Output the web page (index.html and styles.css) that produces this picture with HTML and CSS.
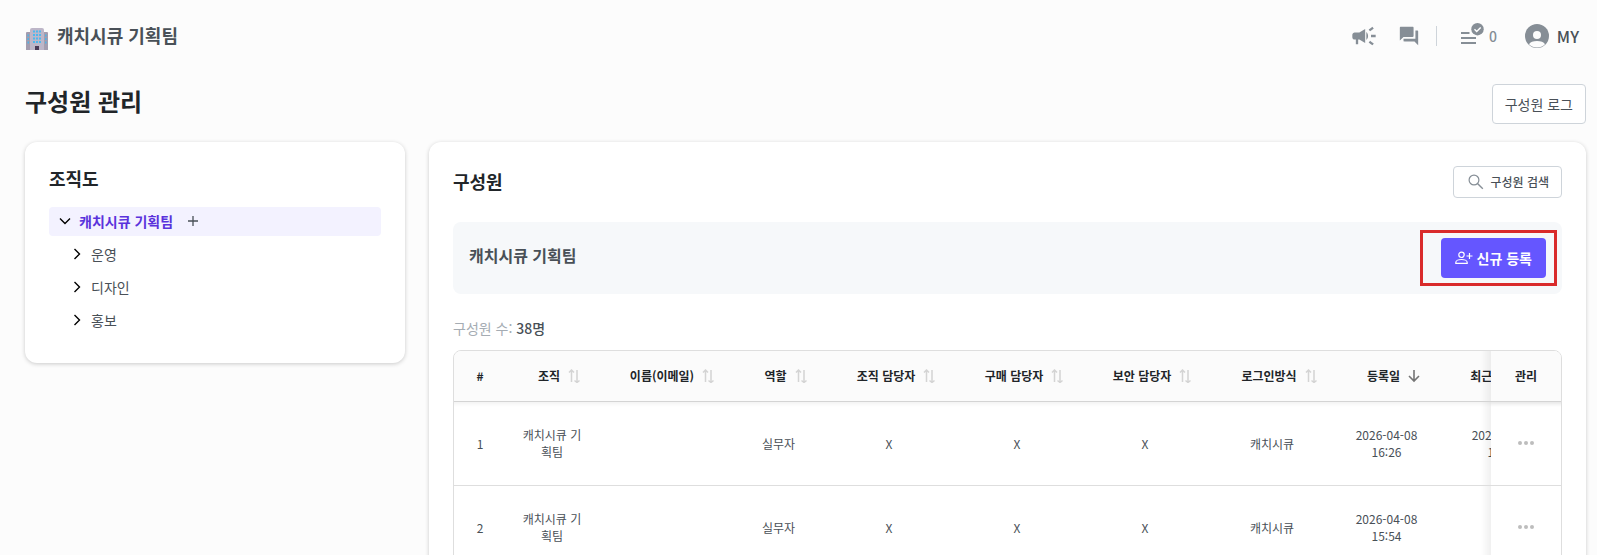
FILE: index.html
```html
<!DOCTYPE html>
<html lang="ko">
  <head>
    <meta charset="UTF-8" />
    <meta name="viewport" content="width=device-width, initial-scale=1.0" />
    <title>구성원 관리</title>
    <link rel="stylesheet" href="styles.css">
  </head>
  <body>
    <!-- shared icons -->
    <svg class="sprite" aria-hidden="true">
      <symbol id="sort" viewBox="0 0 12 14">
        <path d="M3.5 13V1.5M1 3.5L3.5 1L6 3.5M9 1v11.5M6.5 11.5L9 13.5L11.5 11.5" fill="none" stroke="currentColor" stroke-width="1.5" />
      </symbol>
      <symbol id="chevron" viewBox="0 0 12 12">
        <path d="M3.5 1l5 5-5 5" fill="none" stroke="currentColor" stroke-width="1.4" />
      </symbol>
      <symbol id="dots" viewBox="0 0 16 4">
        <circle cx="2" cy="2" r="2" />
        <circle cx="8" cy="2" r="2" />
        <circle cx="14" cy="2" r="2" />
      </symbol>
    </svg>

    <div class="app">
      <header class="topbar">
        <a class="team" href="#">
          <svg width="22" height="22" viewBox="0 0 22 22">
            <path d="M0 5q0-1 1-1h4v18H0zM17 4h4q1 0 1 1v17h-5z" fill="#a39daf" />
            <path d="M4 2q0-2 2-2h10q2 0 2 2v20H4z" fill="#bdb6c8" />
            <path d="M1.500 6.500h1.500v2H1.500zM1.500 10h1.500v2H1.500zM1.500 13.500h1.500v2H1.500zM19 6.500h1.500v2H19zM19 10h1.500v2H19zM19 13.500h1.500v2H19z" fill="#4fb3e8" />
            <path d="M7 2.500h2v2H7zM10 2.500h2v2h-2zM13 2.500h2v2h-2zM7 6h2v2H7zM10 6h2v2h-2zM13 6h2v2h-2zM7 9.500h2v2H7zM10 9.500h2v2h-2zM13 9.500h2v2h-2zM7 13h2v2H7zM10 13h2v2h-2zM13 13h2v2h-2z" fill="#4db8ee" />
            <path d="M9 18h4v4H9z" fill="#4a3b57" />
          </svg>
          <span>캐치시큐 기획팀</span>
        </a>
        <nav class="tools">
          <button class="tool" aria-label="공지">
            <svg width="28" height="28" viewBox="0 0 24 24" fill="currentColor"><path d="M18 11v2h4v-2h-4zm-2 6.610c.96.71 2.210 1.650 3.200 2.390.4-.53.8-1.070 1.200-1.600-.99-.74-2.240-1.680-3.200-2.400-.4.54-.8 1.080-1.200 1.610zM20.400 5.600c-.4-.53-.8-1.070-1.200-1.600-.99.74-2.240 1.680-3.200 2.400.4.53.8 1.070 1.200 1.600.96-.72 2.210-1.650 3.200-2.400zM4 9c-1.100 0-2 .9-2 2v2c0 1.100.9 2 2 2h1v4h2v-4h1l5 3V6L8 9H4zm11.500 3c0-1.330-.58-2.530-1.500-3.350v6.690c.92-.81 1.500-2.010 1.500-3.340z" /></svg>
          </button>
          <button class="tool" aria-label="문의">
            <svg width="22" height="22" viewBox="0 0 24 24" fill="currentColor"><path d="M21 6h-2v9H6v2c0 .55.45 1 1 1h11l4 4V7c0-.55-.45-1-1-1zm-4 6V3c0-.55-.45-1-1-1H3c-.55 0-1 .45-1 1v14l4-4h10c.55 0 1-.45 1-1z" /></svg>
          </button>
          <span class="divider"></span>
          <button class="tool todo">
            <svg width="24" height="24" viewBox="0 0 24 24" aria-hidden="true">
              <path d="M1 10h8.500M1 15h15M1 20h15" stroke="currentColor" stroke-width="2" />
              <circle cx="17.500" cy="6.200" r="6.200" fill="currentColor" />
              <path d="M14.500 6.200l2.200 2.200 4-4" fill="none" stroke="#fff" stroke-width="1.400" />
            </svg>
            <span>0</span>
          </button>
          <button class="tool my">
            <svg width="24" height="24" viewBox="0 0 24 24" aria-hidden="true">
              <circle cx="12" cy="12" r="12" fill="currentColor" />
              <circle cx="12" cy="11" r="4" fill="#fcfcfc" />
              <path d="M4 20.200a8.500 4.800 0 0 1 16 0a11.500 11.500 0 0 1-16 0z" fill="#fcfcfc" />
            </svg>
            <span>MY</span>
          </button>
        </nav>
      </header>

      <div class="page-head">
        <h1>구성원 관리</h1>
        <button class="btn">구성원 로그</button>
      </div>

      <main class="content">
        <section class="card org">
          <h2>조직도</h2>
          <ul class="tree">
            <li class="node selected">
              <button class="toggle open" aria-label="접기"><svg width="12" height="12"><use href="#chevron" /></svg></button>
              <a href="#">캐치시큐 기획팀</a>
              <button class="add" aria-label="조직 추가">
                <svg width="10" height="10" viewBox="0 0 10 10"><path d="M5 0v10M0 5h10" stroke="currentColor" stroke-width="1.300" /></svg>
              </button>
            </li>
            <li class="node child">
              <button class="toggle" aria-label="펼치기"><svg width="12" height="12"><use href="#chevron" /></svg></button>
              <a href="#">운영</a>
            </li>
            <li class="node child">
              <button class="toggle" aria-label="펼치기"><svg width="12" height="12"><use href="#chevron" /></svg></button>
              <a href="#">디자인</a>
            </li>
            <li class="node child">
              <button class="toggle" aria-label="펼치기"><svg width="12" height="12"><use href="#chevron" /></svg></button>
              <a href="#">홍보</a>
            </li>
          </ul>
        </section>

        <section class="card members">
          <div class="members-head">
            <h2>구성원</h2>
            <button class="btn search">
              <svg width="16" height="16" viewBox="0 0 16 16" aria-hidden="true"><circle cx="6" cy="6" r="4.900" fill="none" stroke="currentColor" stroke-width="1.200" /><path d="M9.500 9.500l5.300 5.300" stroke="currentColor" stroke-width="1.400" /></svg>
              구성원 검색
            </button>
          </div>

          <div class="group">
            <h3>캐치시큐 기획팀</h3>
            <div class="highlight">
              <button class="btn primary">
                <svg width="18" height="14" viewBox="0 0 18 14" aria-hidden="true" fill="none" stroke="currentColor" stroke-width="1.200">
                  <circle cx="6.500" cy="3.800" r="2.700" />
                  <path d="M.8 12.400v-1c0-1.800 3-2.900 5.700-2.900s5.700 1.100 5.700 2.900v1zM14.500 2v6M11.500 5h6" />
                </svg>
                신규 등록
              </button>
            </div>
          </div>

          <p class="count">구성원 수: <strong>38명</strong></p>

          <div class="table-wrap">
            <table>
              <colgroup>
                <col class="c-num"><col class="c-org"><col class="c-name"><col class="c-role">
                <col class="c-mgr"><col class="c-mgr"><col class="c-mgr"><col class="c-login">
                <col class="c-date"><col class="c-last"><col class="c-act">
              </colgroup>
              <thead>
                <tr>
                  <th>#</th>
                  <th><button class="sort">조직<svg width="12" height="14"><use href="#sort" /></svg></button></th>
                  <th><button class="sort">이름(이메일)<svg width="12" height="14"><use href="#sort" /></svg></button></th>
                  <th><button class="sort">역할<svg width="12" height="14"><use href="#sort" /></svg></button></th>
                  <th><button class="sort">조직 담당자<svg width="12" height="14"><use href="#sort" /></svg></button></th>
                  <th><button class="sort">구매 담당자<svg width="12" height="14"><use href="#sort" /></svg></button></th>
                  <th><button class="sort">보안 담당자<svg width="12" height="14"><use href="#sort" /></svg></button></th>
                  <th><button class="sort">로그인방식<svg width="12" height="14"><use href="#sort" /></svg></button></th>
                  <th>
                    <button class="sort active">등록일<svg width="12" height="14" viewBox="0 0 12 14"><path d="M6 1v11M1 7l5 5 5-5" fill="none" stroke="currentColor" stroke-width="1.600" /></svg></button>
                  </th>
                  <th><button class="sort">최근 접속일<svg width="12" height="14"><use href="#sort" /></svg></button></th>
                  <th class="pinned">관리</th>
                </tr>
              </thead>
              <tbody>
                <tr>
                  <td>1</td>
                  <td>캐치시큐 기획팀</td>
                  <td></td>
                  <td>실무자</td>
                  <td>X</td>
                  <td>X</td>
                  <td>X</td>
                  <td>캐치시큐</td>
                  <td>2026-04-08 16:26</td>
                  <td>2026-04-08<br>16:27</td>
                  <td class="pinned"><button class="more" aria-label="관리 메뉴"><svg width="16" height="4"><use href="#dots" /></svg></button></td>
                </tr>
                <tr>
                  <td>2</td>
                  <td>캐치시큐 기획팀</td>
                  <td></td>
                  <td>실무자</td>
                  <td>X</td>
                  <td>X</td>
                  <td>X</td>
                  <td>캐치시큐</td>
                  <td>2026-04-08 15:54</td>
                  <td></td>
                  <td class="pinned"><button class="more" aria-label="관리 메뉴"><svg width="16" height="4"><use href="#dots" /></svg></button></td>
                </tr>
              </tbody>
            </table>
          </div>
        </section>
      </main>
    </div>
  </body>
</html>
```

FILE: styles.css
```css
* {
  margin: 0;
  padding: 0;
  box-sizing: border-box;
}

html {
  background: #fff;
}

body {
  font-family: "Noto Sans CJK KR", "Noto Sans", sans-serif;
  font-size: 14px;
  line-height: 20px;
  color: #495057;
}

/* scrolls on its own, with a thin white edge below */
.app {
  height: calc(100vh - 4px);
  overflow-y: auto;
  scrollbar-width: none;
  background: #fcfcfc;
}

button {
  font: inherit;
  color: inherit;
  border: none;
  background: none;
  cursor: pointer;
}

a {
  color: inherit;
  text-decoration: none;
}

svg {
  display: block;
  flex: none;
}

h1,
h2 {
  color: #212529;
}

.sprite {
  display: none;
}

/* top bar */
.topbar {
  display: flex;
  justify-content: space-between;
  align-items: center;
  height: 72px;
  padding: 0 18px 0 26px;
}

.team {
  display: flex;
  align-items: flex-end;
  gap: 9px;
  font-size: 18px;
  line-height: 26px;
  font-weight: 700;
}

.team span {
  padding-bottom: 2px;
}

.tools {
  display: flex;
  align-items: center;
  color: #868e96;
}

.tool {
  display: flex;
  align-items: center;
}

.tool + .tool {
  margin-left: 20px;
}

.divider {
  width: 1px;
  height: 20px;
  margin: 0 23px 0 16px;
  background: #ced4da;
}

.todo {
  gap: 5px;
  font-weight: 500;
}

.todo svg {
  margin-bottom: 2px;
}

.tools .my {
  margin-left: 28px;
  gap: 8px;
  font-size: 16px;
  font-weight: 500;
}

.my span {
  color: #495057;
}

/* page title */
.page-head {
  display: flex;
  justify-content: space-between;
  align-items: flex-start;
  padding: 12px 11px 18px 25px;
}

h1 {
  font-size: 24px;
  line-height: 34px;
}

.btn {
  display: flex;
  align-items: center;
  justify-content: center;
  height: 40px;
  padding: 0 12px;
  border: 1px solid #ced4da;
  border-radius: 4px;
  background: #fff;
}

/* cards */
.content {
  display: flex;
  align-items: flex-start;
  gap: 24px;
  padding: 0 11px 24px 25px;
}

.card {
  padding: 24px;
  border-radius: 12px;
  background: #fff;
  box-shadow: 0 1px 4px rgba(0, 0, 0, 0.2);
}

h2 {
  font-size: 18px;
  line-height: 24px;
}

.org {
  flex: 0 0 380px;
  padding-bottom: 28px;
}

.tree {
  display: flex;
  flex-direction: column;
  gap: 4px;
  margin-top: 17px;
  list-style: none;
}

.node {
  display: flex;
  align-items: center;
  height: 29px;
  padding: 0 0 2px 10px;
  border-radius: 4px;
}

.node.child {
  padding-left: 22px;
}

.toggle {
  margin-right: 8px;
  color: #000;
}

.toggle.open svg {
  transform: rotate(90deg);
}

.selected {
  background: #f3f2ff;
}

.selected a {
  color: #5a32dc;
  font-weight: 700;
}

.add {
  margin-left: 15px;
}

.members {
  flex: 1;
  min-width: 0;
}

.members-head {
  display: flex;
  justify-content: space-between;
  align-items: center;
}

.members-head h2 {
  padding-bottom: 2px;
}

.search {
  gap: 6px;
  height: 32px;
  padding: 0 12px 0 14px;
  font-size: 12px;
  font-weight: 500;
}

.search svg {
  color: #868e96;
}

.group {
  display: flex;
  justify-content: space-between;
  align-items: center;
  height: 72px;
  margin-top: 24px;
  padding: 0 5px 0 16px;
  border-radius: 8px;
  background: #f6f8fa;
}

h3 {
  padding-bottom: 6px;
  font-size: 16px;
  font-weight: 700;
}

.highlight {
  padding: 5px 8px 5px 18px;
  border: 3px solid #d92b2b;
}

.primary {
  gap: 4px;
  padding: 0 14px;
  border: none;
  color: #fff;
  background: #6556ff;
  font-weight: 700;
}

.count {
  margin: 24px 0 12px;
  color: #a5acb3;
}

.count strong {
  color: #495057;
  font-weight: 500;
}

/* members table */
.table-wrap {
  overflow-x: auto;
  border: 1px solid #dedede;
  border-radius: 8px;
}

table {
  width: 100%;
  min-width: 1183px;
  table-layout: fixed;
  border-collapse: separate;
  border-spacing: 0;
  font-size: 12px;
  line-height: 17px;
  text-align: center;
}

.c-num { width: 52px; }
.c-org { width: 92px; }
.c-name { width: 134px; }
.c-role { width: 93px; }
.c-mgr { width: 128px; }
.c-login { width: 126px; }
.c-date { width: 103px; }
.c-last { width: 129px; }
.c-act { width: 70px; }

th,
td {
  border-bottom: 1px solid #dedede;
  background: #fff;
}

th {
  position: sticky;
  top: 0;
  z-index: 1;
  height: 51px;
  padding-bottom: 1px;
  color: #212529;
  background: #fbfbfb;
}

th::after {
  content: "";
  position: absolute;
  top: 100%;
  left: 0;
  width: 100%;
  height: 6px;
  background: linear-gradient(rgba(0, 0, 0, 0.05), transparent);
}

td {
  height: 84px;
  padding: 0 16px 1px;
}

.sort {
  display: flex;
  align-items: center;
  justify-content: center;
  gap: 8px;
  width: 100%;
  padding-left: 14px;
  white-space: nowrap;
}

.sort svg {
  color: #d4d4d4;
}

.sort.active svg {
  color: #757575;
}

.pinned {
  position: sticky;
  right: 0;
  padding: 0 0 4px;
}

.pinned::before {
  content: "";
  position: absolute;
  top: 0;
  right: 100%;
  width: 10px;
  height: 100%;
  background: linear-gradient(to left, rgba(0, 0, 0, 0.06), transparent);
}

th.pinned {
  z-index: 2;
  padding-bottom: 1px;
}

.more {
  padding: 8px;
  color: #bdbdbd;
}

.more svg {
  fill: currentColor;
}
```
